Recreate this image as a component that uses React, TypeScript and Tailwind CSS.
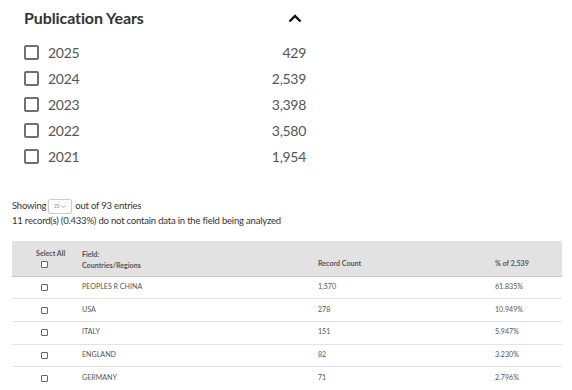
import React from "react";

const years = [
  ["2025", "429"],
  ["2024", "2,539"],
  ["2023", "3,398"],
  ["2022", "3,580"],
  ["2021", "1,954"],
];

const rows = [
  ["PEOPLES R CHINA", "1,570", "61.835%"],
  ["USA", "278", "10.949%"],
  ["ITALY", "151", "5.947%"],
  ["ENGLAND", "82", "3.230%"],
  ["GERMANY", "71", "2.796%"],
];

function SmallBox() {
  return <div className="w-[7px] h-[7px] border border-[#666] rounded-[1px] bg-white" />;
}

export default function App() {
  return (
    <div
      className="w-[572px] h-[390px] bg-white overflow-hidden text-[#444]"
      style={{ fontFamily: "Lato, 'Noto Sans', sans-serif" }}
    >
      <div className="ml-[24px] w-[282px]">
        <div className="h-[36px] flex items-center justify-between">
          <span className="text-[16px] font-bold text-[#333] leading-none tracking-[-0.1px]">Publication Years</span>
          <svg width="14" height="9" viewBox="0 0 14 9" className="mr-[4px]">
            <path d="M1.5 7.5 L7 2 L12.5 7.5" fill="none" stroke="#111" strokeWidth="2.4" />
          </svg>
        </div>
        <div className="mt-[3px] flex flex-col">
          {years.map(([y, n]) => (
            <div key={y} className="h-[26px] flex items-center">
              <div className="w-[15px] h-[15px] border-2 border-[#707070] rounded-[2px]" />
              <span className="ml-[9px] text-[14px] text-[#555] tracking-[-0.3px]">{y}</span>
              <span className="ml-auto text-[14px] text-[#555] tracking-[-0.3px]">{n}</span>
            </div>
          ))}
        </div>
      </div>

      <div className="ml-[12px] mt-[30px] text-[9.5px] text-[#333] leading-[14.5px] tracking-[-0.2px]">
        <div className="flex items-center">
          <span>Showing</span>
          <span className="ml-[2px] w-[24px] h-[15px] border border-[#ccc] rounded-[2px] flex items-center justify-center gap-[2px] text-[5px] text-[#888]">
            <span>25</span>
            <svg width="5" height="3" viewBox="0 0 5 3">
              <path d="M0.5 0.5 L2.5 2.5 L4.5 0.5" fill="none" stroke="#999" strokeWidth="0.8" />
            </svg>
          </span>
          <span className="ml-[3px]">out of 93 entries</span>
        </div>
        <div>11 record(s) (0.433%) do not contain data in the field being analyzed</div>
      </div>

      <div className="ml-[12px] mt-[12px] w-[550px] text-[7.1px] text-[#555]">
        <div className="h-[36px] bg-[#e2e2e2] border-b border-[#c8c8c8] flex items-stretch font-bold text-[#555]">
          <div className="w-[70px] pl-[24px] pt-[8px] flex flex-col">
            <span className="leading-[10px]">Select All</span>
            <div className="mt-[2px] ml-[5px]">
              <SmallBox />
            </div>
          </div>
          <div className="w-[236px] pt-[8px] flex flex-col leading-[11.5px]">
            <span>Field:</span>
            <span>Countries/Regions</span>
          </div>
          <div className="w-[177px] flex items-end pb-[6px]">Record Count</div>
          <div className="flex-1 flex items-end pb-[6px]">% of 2,539</div>
        </div>
        {rows.map(([c, n, p], i) => (
          <div
            key={c}
            className={`h-[22.7px] flex items-center ${i < rows.length - 1 ? "border-b border-[#e4e4e4]" : ""}`}
          >
            <div className="w-[70px] pl-[29px]">
              <SmallBox />
            </div>
            <div className="w-[236px]">{c}</div>
            <div className="w-[177px]">{n}</div>
            <div className="flex-1">{p}</div>
          </div>
        ))}
      </div>
    </div>
  );
}
